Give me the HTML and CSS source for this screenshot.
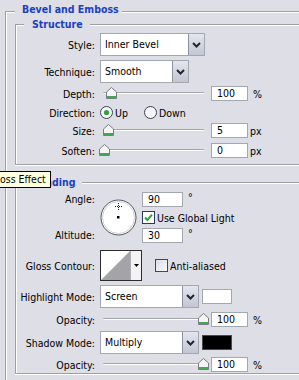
FILE: index.html
```html
<!DOCTYPE html>
<html lang="en">
<head>
    <meta charset="UTF-8">
    <meta name="viewport" content="width=device-width, initial-scale=1.0">
    <title>Layer Style - Bevel and Emboss</title>
    <link rel="stylesheet" href="styles.css">
</head>
<body>
    <div class="panel group">
        <div class="group-title">Bevel and Emboss</div>

        <div class="group structure">
            <div class="group-title">Structure</div>

            <div class="row row-select first">
                <span class="label">Style:</span>
                <div class="select select-style">
                    <span class="select-text">Inner Bevel</span>
                    <span class="drop"><svg width="9" height="6" viewBox="0 0 9 6"><path d="M1 1l3.5 3.5L8 1" fill="none" stroke="#22252f" stroke-width="2"/></svg></span>
                </div>
            </div>

            <div class="row row-select">
                <span class="label">Technique:</span>
                <div class="select select-technique">
                    <span class="select-text">Smooth</span>
                    <span class="drop"><svg width="9" height="6" viewBox="0 0 9 6"><path d="M1 1l3.5 3.5L8 1" fill="none" stroke="#22252f" stroke-width="2"/></svg></span>
                </div>
            </div>

            <div class="row row-field tight">
                <span class="label">Depth:</span>
                <div class="slider">
                    <span class="track"></span>
                    <svg class="thumb" style="left:6px" width="11" height="12" viewBox="0 0 11 12"><path d="M5.5 .5L10.5 5v6.5H.5V5z" fill="#f4f4f6" stroke="#7b7d85"/><rect x="1" y="9" width="9" height="2" fill="#3fa94f"/></svg>
                </div>
                <span class="num">100</span>
                <span class="unit">%</span>
            </div>

            <div class="row row-field">
                <span class="label">Direction:</span>
                <span class="radio">
                    <svg width="13" height="13" viewBox="0 0 13 13"><circle cx="6.5" cy="6.5" r="6" fill="#f6f6f8" stroke="#3b4356"/><circle cx="6.5" cy="6.5" r="2.6" fill="#2fa340"/></svg>Up
                </span>
                <span class="radio">
                    <svg width="13" height="13" viewBox="0 0 13 13"><circle cx="6.5" cy="6.5" r="6" fill="#f6f6f8" stroke="#3b4356"/></svg>Down
                </span>
            </div>

            <div class="row row-field tight">
                <span class="label">Size:</span>
                <div class="slider">
                    <span class="track"></span>
                    <svg class="thumb" style="left:3px" width="11" height="12" viewBox="0 0 11 12"><path d="M5.5 .5L10.5 5v6.5H.5V5z" fill="#f4f4f6" stroke="#7b7d85"/><rect x="1" y="9" width="9" height="2" fill="#3fa94f"/></svg>
                </div>
                <span class="num">5</span>
                <span class="unit unit-px">px</span>
            </div>

            <div class="row row-field loose">
                <span class="label">Soften:</span>
                <div class="slider">
                    <span class="track"></span>
                    <svg class="thumb" style="left:-1px" width="11" height="12" viewBox="0 0 11 12"><path d="M5.5 .5L10.5 5v6.5H.5V5z" fill="#f4f4f6" stroke="#7b7d85"/><rect x="1" y="9" width="9" height="2" fill="#3fa94f"/></svg>
                </div>
                <span class="num">0</span>
                <span class="unit unit-px">px</span>
            </div>
        </div>

        <div class="group shading">
            <div class="group-title">Shading</div>

            <div class="angle-block">
                <div class="angle-labels">
                    <span>Angle:</span>
                    <span>Altitude:</span>
                </div>
                <svg class="dial" width="37" height="37" viewBox="0 0 37 37">
                    <circle cx="18.5" cy="18.5" r="17.5" fill="#fff" stroke="#55575f"/>
                    <circle cx="18.5" cy="18.5" r="16" fill="none" stroke="#cfd0d8"/>
                    <path d="M15 7.5h7M18.5 4v7" stroke="#222" stroke-dasharray="1 1"/>
                    <rect x="17" y="17" width="2.5" height="2.5" fill="#000"/>
                </svg>
                <div class="angle-fields">
                    <div class="field-line">
                        <span class="num num-angle">90</span>
                        <span class="deg">°</span>
                    </div>
                    <div class="check-line">
                        <svg class="check" width="13" height="13" viewBox="0 0 13 13"><rect x=".5" y=".5" width="12" height="12" fill="#fff" stroke="#2a3a5e"/><path d="M3 6.5l2.4 2.6L10 3.6" fill="none" stroke="#27a336" stroke-width="2"/></svg>
                        Use Global Light
                    </div>
                    <div class="field-line">
                        <span class="num num-angle">30</span>
                        <span class="deg">°</span>
                    </div>
                </div>
            </div>

            <div class="row row-contour">
                <span class="label">Gloss Contour:</span>
                <div class="contour">
                    <svg width="29" height="29" viewBox="0 0 29 29"><path d="M0 29L29 0V29z" fill="#a4a4a8"/></svg>
                    <span class="contour-drop"><svg width="5" height="3" viewBox="0 0 5 3"><path d="M0 0h5L2.5 3z" fill="#000"/></svg></span>
                </div>
                <span class="check-line anti">
                    <svg class="check" width="13" height="13" viewBox="0 0 13 13"><defs><linearGradient id="box" x1="0" y1="0" x2="1" y2="1"><stop offset="0" stop-color="#d9dce4"/><stop offset="1" stop-color="#fbfbfc"/></linearGradient></defs><rect x=".5" y=".5" width="12" height="12" fill="url(#box)" stroke="#3a4866"/></svg>
                    Anti-aliased
                </span>
            </div>

            <div class="row row-select">
                <span class="label">Highlight Mode:</span>
                <div class="select select-mode">
                    <span class="select-text">Screen</span>
                    <span class="drop"><svg width="9" height="6" viewBox="0 0 9 6"><path d="M1 1l3.5 3.5L8 1" fill="none" stroke="#22252f" stroke-width="2"/></svg></span>
                </div>
                <span class="swatch"></span>
            </div>

            <div class="row row-field">
                <span class="label">Opacity:</span>
                <div class="slider">
                    <span class="track"></span>
                    <svg class="thumb" style="left:98px" width="11" height="12" viewBox="0 0 11 12"><path d="M5.5 .5L10.5 5v6.5H.5V5z" fill="#f4f4f6" stroke="#7b7d85"/><rect x="1" y="9" width="9" height="2" fill="#3fa94f"/></svg>
                </div>
                <span class="num">100</span>
                <span class="unit">%</span>
            </div>

            <div class="row row-select">
                <span class="label">Shadow Mode:</span>
                <div class="select select-mode">
                    <span class="select-text">Multiply</span>
                    <span class="drop"><svg width="9" height="6" viewBox="0 0 9 6"><path d="M1 1l3.5 3.5L8 1" fill="none" stroke="#22252f" stroke-width="2"/></svg></span>
                </div>
                <span class="swatch swatch-dark"></span>
            </div>

            <div class="row row-field tight">
                <span class="label">Opacity:</span>
                <div class="slider">
                    <span class="track"></span>
                    <svg class="thumb" style="left:98px" width="11" height="12" viewBox="0 0 11 12"><path d="M5.5 .5L10.5 5v6.5H.5V5z" fill="#f4f4f6" stroke="#7b7d85"/><rect x="1" y="9" width="9" height="2" fill="#3fa94f"/></svg>
                </div>
                <span class="num">100</span>
                <span class="unit">%</span>
            </div>
        </div>
    </div>

    <div class="tooltip">oss Effect</div>
</body>
</html>
```

FILE: styles.css
```css
body {
    margin: 0;
    height: 380px;
    overflow: hidden;
    position: relative;
    background-color: #dddee6;
    font-family: "DejaVu Sans Condensed", "Liberation Sans", sans-serif;
    font-size: 10.5px;
    color: #000;
}
.group {
    border: 1px solid #9d9ea6;
    border-right: none;
    box-shadow: inset 1px 1px 0 #fff, 0 1px 0 #fff;
}
.group-title {
    width: fit-content;
    margin: -8px 0 0 8px;
    padding: 0 7px 0 8px;
    line-height: 14px;
    background-color: #dddee6;
    color: #1a40c0;
    font-weight: bold;
}
.panel {
    margin: 11px 0 0 5px;
    padding: 0 0 6px 9px;
    border-bottom: none;
}
.panel > .group-title {
    margin: -10px 0 0 0;
    padding: 0 3px 0 7px;
}
.structure {
    margin-top: 8px;
    padding-bottom: 6px;
}
.shading {
    margin-top: 17px;
    padding-bottom: 1px;
}
.row {
    display: flex;
    align-items: center;
    margin-top: 4px;
}
.row.first {
    margin-top: 2px;
}
.row.tight {
    margin-top: 3px;
}
.row.loose {
    margin-top: 5px;
}
.row-select {
    height: 23px;
}
.row-field {
    height: 15px;
}
.label {
    width: 79px;
    flex-shrink: 0;
    margin-right: 5px;
    text-align: right;
    white-space: nowrap;
}
.select {
    display: flex;
    height: 23px;
    box-sizing: border-box;
    border: 1px solid #a3a7b0;
    background-color: #fff;
}
.select-style {
    width: 105px;
}
.select-technique {
    width: 89px;
}
.select-mode {
    width: 99px;
}
.select-text {
    flex: 1;
    padding-left: 4px;
    line-height: 21px;
}
.drop {
    width: 15px;
    display: flex;
    align-items: center;
    justify-content: center;
    border-left: 1px solid #8d91a0;
    background: linear-gradient(#e4e6ed, #c3c6d3);
}
.slider {
    position: relative;
    width: 110px;
    height: 15px;
    flex-shrink: 0;
}
.track {
    position: absolute;
    left: 3px;
    right: 6px;
    top: 6px;
    height: 1px;
    background-color: #a3a5ad;
    border-bottom: 1px solid #fff;
    border-radius: 1px;
}
.thumb {
    position: absolute;
    top: 1px;
}
.num {
    width: 37px;
    height: 15px;
    box-sizing: border-box;
    margin-left: 1px;
    padding-left: 5px;
    border: 1px solid #a3a7b0;
    background-color: #fff;
    line-height: 13px;
}
.unit {
    margin-left: 5px;
}
.unit-px {
    margin-left: 2px;
}
.radio {
    display: flex;
    align-items: center;
}
.radio svg {
    margin-right: 2px;
}
.radio + .radio {
    margin-left: 16px;
}
.angle-block {
    display: flex;
    height: 51px;
    margin-top: 3px;
}
.angle-labels {
    width: 79px;
    display: flex;
    flex-direction: column;
    justify-content: space-between;
    text-align: right;
    line-height: 15px;
}
.dial {
    align-self: center;
    margin: 0 5px;
}
.angle-fields {
    display: flex;
    flex-direction: column;
    justify-content: space-between;
}
.field-line {
    display: flex;
    height: 15px;
}
.num-angle {
    width: 41px;
    margin-left: 0;
}
.deg {
    margin-left: 5px;
    line-height: 10px;
}
.check-line {
    display: flex;
    align-items: center;
    height: 14px;
}
.check {
    margin-right: 2px;
}
.row-contour {
    height: 31px;
    margin-top: 7px;
}
.contour {
    display: flex;
    width: 42px;
    height: 31px;
    box-sizing: border-box;
    border: 1px solid #2c2c2c;
    background-color: #fff;
}
.contour-drop {
    flex: 1;
    display: flex;
    align-items: center;
    justify-content: center;
    border-left: 1px solid #b0b0b4;
    background-color: #f3f3f5;
}
.anti {
    margin-left: 13px;
}
.swatch {
    width: 30px;
    height: 15px;
    box-sizing: border-box;
    margin-left: 3px;
    border: 1px solid #a3a7b0;
    background-color: #fff;
}
.swatch-dark {
    background-color: #000;
    border-color: #4a4a4a;
}
.tooltip {
    position: absolute;
    left: 0;
    top: 171px;
    width: 51px;
    height: 17px;
    box-sizing: border-box;
    border: 1px solid #000;
    border-left: none;
    background-color: #ffffe1;
    line-height: 15px;
    white-space: nowrap;
    overflow: hidden;
}
```
